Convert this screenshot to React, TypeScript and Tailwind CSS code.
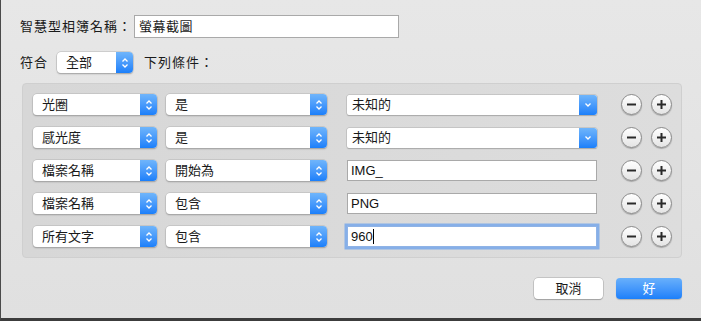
import React from "react";

const FONT = { fontFamily: '"Liberation Sans", "Noto Sans CJK TC", sans-serif' };

function Stepper() {
  return (
    <div className="flex h-full w-[17px] items-center justify-center rounded-r-[4px] bg-gradient-to-b from-[#6fb5fb] to-[#1a7ffa]">
      <svg width="8" height="12" viewBox="0 0 8 12">
        <path d="M1.5 4.5 L4 2 L6.5 4.5" fill="none" stroke="white" strokeWidth="1.3" />
        <path d="M1.5 7.5 L4 10 L6.5 7.5" fill="none" stroke="white" strokeWidth="1.3" />
      </svg>
    </div>
  );
}

function Popup({ label, w }: { label: string; w: string }) {
  return (
    <div
      className={`${w} flex h-[21px] items-center rounded-[4px] bg-white shadow-[0_0_0_0.5px_#b5b5b5,0_1px_1.5px_rgba(0,0,0,0.35)]`}
    >
      <div className="flex-1 pl-[9px] text-[13px] leading-none text-[#1a1a1a]">{label}</div>
      <Stepper />
    </div>
  );
}

function ComboPopup({ label }: { label: string }) {
  return (
    <div className="flex h-[20px] w-[250px] items-center rounded-[2px] bg-white shadow-[0_0_0_0.5px_#b0b0b0,0_1px_1px_rgba(0,0,0,0.25)]">
      <div className="flex-1 pl-[5px] text-[13px] leading-none text-[#1a1a1a]">{label}</div>
      <div className="flex h-full w-[18px] items-center justify-center rounded-r-[3px] bg-gradient-to-b from-[#6fb5fb] to-[#1a7ffa]">
        <svg width="8" height="6" viewBox="0 0 8 6">
          <path d="M1.5 1.5 L4 4 L6.5 1.5" fill="none" stroke="white" strokeWidth="1.3" />
        </svg>
      </div>
    </div>
  );
}

function TextField({ value, focused }: { value: string; focused?: boolean }) {
  return (
    <div
      className={`flex h-[21px] w-[250px] items-center border bg-white pl-[3px] text-[13px] leading-none text-[#111] ${
        focused
          ? "border-[#8fb3e6] shadow-[0_0_0_2.5px_#86afe8]"
          : "border-[#a9a9a9]"
      }`}
    >
      {value}
      {focused && <span className="ml-[0.5px] inline-block h-[15px] w-px bg-black" />}
    </div>
  );
}

function RoundBtn({ plus }: { plus?: boolean }) {
  return (
    <div className="flex h-[21px] w-[21px] items-center justify-center rounded-full border border-[#8b8b8b] bg-gradient-to-b from-white to-[#e4e4e4] shadow-[0_1px_1px_rgba(0,0,0,0.25)]">
      <svg width="11" height="11" viewBox="0 0 11 11">
        <path d="M1 5.5 H10" stroke="#2a2a2a" strokeWidth="2" />
        {plus && <path d="M5.5 1 V10" stroke="#2a2a2a" strokeWidth="2" />}
      </svg>
    </div>
  );
}

type Row = { a: string; b: string; c: string; kind: "combo" | "field" | "focus" };

const rows: Row[] = [
  { a: "光圈", b: "是", c: "未知的", kind: "combo" },
  { a: "感光度", b: "是", c: "未知的", kind: "combo" },
  { a: "檔案名稱", b: "開始為", c: "IMG_", kind: "field" },
  { a: "檔案名稱", b: "包含", c: "PNG", kind: "field" },
  { a: "所有文字", b: "包含", c: "960", kind: "focus" },
];

export default function App() {
  return (
    <div
      style={FONT}
      className="flex h-[321px] w-[701px] flex-col border-b-[3px] border-l border-b-[#3c3c3c] border-l-[#4a4a4a] bg-gradient-to-b from-[#e7e7e7] to-[#e0e0e0] text-[13px] text-[#1a1a1a]"
    >
      {/* Name row */}
      <div className="mt-[15px] flex h-[23px] items-center pl-[19px]">
        <div className="w-[114px] tracking-[1px]">智慧型相簿名稱：</div>
        <div className="flex h-[23px] w-[265px] items-center border border-[#a9a9a9] bg-white pl-[4px] tracking-[0.5px]">
          螢幕截圖
        </div>
      </div>

      {/* Match row */}
      <div className="mt-[14px] flex h-[21px] items-center pl-[19px]">
        <div className="w-[37px] tracking-[1px]">符合</div>
        <Popup label="全部" w="w-[76px]" />
        <div className="ml-[11px] tracking-[1px]">下列條件：</div>
      </div>

      {/* Criteria panel */}
      <div className="ml-[21px] mt-[10px] flex h-[175px] w-[660px] flex-col gap-[12px] rounded-[4px] border border-[#cfcfcf] bg-gradient-to-r from-[#d7d7d7] via-[#dadada] to-[#dddddd] pl-[10px] pt-[10px]">
        {rows.map((r, i) => (
          <div key={i} className="flex h-[21px] items-center">
            <Popup label={r.a} w="w-[124px]" />
            <div className="ml-[9px]">
              <Popup label={r.b} w="w-[161px]" />
            </div>
            <div className="ml-[20px]">
              {r.kind === "combo" ? (
                <ComboPopup label={r.c} />
              ) : (
                <TextField value={r.c} focused={r.kind === "focus"} />
              )}
            </div>
            <div className="ml-[24px]">
              <RoundBtn />
            </div>
            <div className="ml-[9px]">
              <RoundBtn plus />
            </div>
          </div>
        ))}
      </div>

      {/* Buttons */}
      <div className="mt-[20px] flex justify-end gap-[13px] pr-[19px]">
        <div className="flex h-[21px] w-[69px] items-center justify-center rounded-[4px] bg-white shadow-[0_0_0_0.5px_#a8a8a8,0_1px_1px_rgba(0,0,0,0.3)]">
          取消
        </div>
        <div className="flex h-[21px] w-[66px] items-center justify-center rounded-[4px] bg-gradient-to-b from-[#68b0fb] to-[#1b7ffa] text-white shadow-[0_1px_1px_rgba(0,0,0,0.2)]">
          好
        </div>
      </div>
    </div>
  );
}
